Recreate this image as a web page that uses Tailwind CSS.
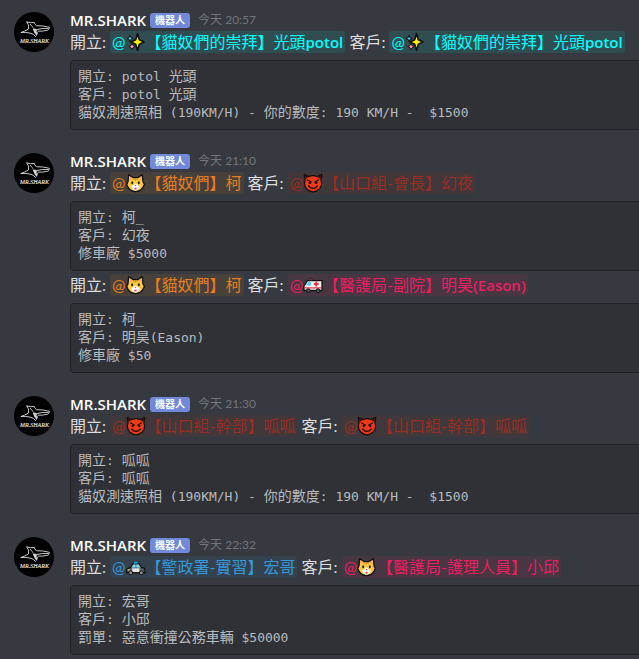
<!DOCTYPE html>
<html lang="zh-Hant">
<head>
<meta charset="utf-8">
<meta name="viewport" content="width=device-width, initial-scale=1">
<title>MR.SHARK</title>
<script src="https://cdn.jsdelivr.net/npm/@tailwindcss/browser@4"></script>
</head>
<body class="bg-[#36393f] overflow-x-hidden font-['Lato','Noto_Sans_CJK_TC',sans-serif] text-base leading-[22px] text-[#dcddde] whitespace-nowrap">
<svg class="hidden" aria-hidden="true">
  <symbol id="avatar" viewBox="0 0 40 40">
    <circle cx="20" cy="20" r="20" fill="#000"/>
    <g fill="none" stroke="#dedede" stroke-width=".9" stroke-linecap="round" stroke-linejoin="round">
      <path d="M13 10Q17 11.300 20.300 10.300 20.500 12.500 22.500 13.700 29 13.500 35.300 15.300 35.500 17.300 33.500 18.300 28 19.500 24 19.200"/>
      <path d="M13 10Q15.300 13 14.600 17 11 19.200 6.800 20.500 12 20 17 21.300 20 22 21.500 24.500"/>
      <path d="M23 17.500Q28 16 34 16.500M16.500 12.500Q17.500 14.500 19 15.500"/>
    </g>
    <path d="M18.600 16.500Q21 16 23 17.500L22.500 20 24 20.500 22.800 24 20.500 21Z" fill="#d0d0d0"/>
    <text x="20.500" y="31" text-anchor="middle" font-family="Liberation Serif, serif" font-style="italic" font-size="6" fill="#dcdcdc" stroke="#dcdcdc" stroke-width=".2">MR.SHARK</text>
  </symbol>
  <symbol id="sparkles" viewBox="0 0 20 20">
    <path d="M11.500 1.500 13.300 7.800 18 10 13.300 12.200 11.500 18.500 9.700 12.200 5 10 9.700 7.800Z" fill="#fff100" stroke="#111" stroke-width="1.600" stroke-linejoin="round"/>
    <path d="M4 3.400 4.900 5.600 7.200 6.500 4.900 7.400 4 9.600 3.100 7.400.8 6.500 3.100 5.600Z" fill="#55c9f5" stroke="#111"/>
    <path d="M6 11.200 7.100 13.600 9.200 14.600 7.100 15.600 6 18 4.900 15.600 2.800 14.600 4.900 13.600Z" fill="#f49ac1" stroke="#111"/>
  </symbol>
  <symbol id="cat" viewBox="0 0 20 20">
    <path d="M2.200 1.600 6.800 4.600h4.400l4.600-3 .7 7.200 1.300 2.800-1.700 3.400Q13.500 18.400 9 18.600 4.500 18.400 1.900 15L.2 11.600 1.500 8.800Z" transform="translate(.5 0)" fill="#ffc83d" stroke="#111" stroke-width="1.300" stroke-linejoin="round"/>
    <path d="M3.900 3.800 6.100 5.400 3.700 7.800ZM15.100 3.800 12.900 5.400 15.300 7.800Z" fill="#f7a56b"/>
    <path d="M9.500 10.200Q11.500 12 13.700 13.200 12.900 17.400 9.500 17.600 6.100 17.400 5.300 13.200 7.500 12 9.500 10.200Z" fill="#fff"/>
    <ellipse cx="6.200" cy="9.800" rx="1" ry="1.500" fill="#222"/><ellipse cx="12.800" cy="9.800" rx="1" ry="1.500" fill="#222"/>
    <path d="M8.500 12h2L9.500 13.300ZM8.500 14.800h2v1.700h-2Z" fill="#e8344a"/>
    <path d="M7.800 5.200v2M9.500 5.200v2.500M11.200 5.200v2" stroke="#c47d18" stroke-width=".8"/>
  </symbol>
  <symbol id="devil" viewBox="0 0 20 20">
    <path d="M1.200 1.300 5.800 3.600Q10 1.800 14.200 3.600L18.800 1.300 18 7.200Q19.800 12.500 16 16.300 13 18.900 10 18.900 7 18.900 4 16.300.2 12.500 2 7.200Z" fill="#f03a17" stroke="#111" stroke-width="1.200" stroke-linejoin="round"/>
    <path d="M1.700 1.800 5.400 3.800 2.500 6.500ZM18.300 1.800 14.600 3.800 17.500 6.500Z" fill="#3a1010"/>
    <path d="M4.600 7 8.300 9.100M15.400 7 11.700 9.100M5.600 13Q10 17.800 14.400 13" fill="none" stroke="#1b0a0a" stroke-width="1.200" stroke-linecap="round"/>
    <circle cx="6.800" cy="9.900" r="1.200" fill="#1b0a0a"/><circle cx="13.200" cy="9.900" r="1.200" fill="#1b0a0a"/>
  </symbol>
  <symbol id="ambulance" viewBox="0 0 20 20">
    <path d="M1 15.500V11L4.500 5.600H19V15.500Z" fill="#f4f4f4" stroke="#111" stroke-width="1.300" stroke-linejoin="round"/>
    <path d="M6 4h3v1.500H6Z" fill="#e8344a" stroke="#111" stroke-width=".6"/>
    <path d="M3 10.500 5.200 7H8v3.500Z" fill="#54c8f0"/>
    <path d="M1.600 12.200h16.800v1.300H1.600ZM12.300 6.600h1.800v1.500h1.500v1.800h-1.500v1.500h-1.800V9.900h-1.500V8.100h1.500Z" fill="#e8344a"/>
    <circle cx="5.300" cy="15.700" r="1.900" fill="#555" stroke="#111"/><circle cx="15" cy="15.700" r="1.900" fill="#555" stroke="#111"/>
  </symbol>
  <symbol id="police" viewBox="0 0 20 20">
    <path d="M.8 15.800V12L4.600 10.300 6.600 6.800H13L15.600 10.300 18.600 11.300 19.200 15.800Z" fill="#566069" stroke="#111" stroke-width="1.300" stroke-linejoin="round"/>
    <path d="M5.600 10.500 7.300 7.600H9.500V10.500ZM10.300 7.600H12.600L14.500 10.500H10.300Z" fill="#7fdcf7"/>
    <path d="M6.200 11.300H13.500V15H6.200Z" fill="#e6e6e6"/>
    <path d="M8 4.800h3.400v1.800H8Z" fill="#18a8f0"/>
    <path d="M1.500 12.300h2v1.200h-2Z" fill="#ffd94a"/>
    <circle cx="4.700" cy="15.900" r="2" fill="#8a8a8a" stroke="#111"/><circle cx="15.300" cy="15.900" r="2" fill="#8a8a8a" stroke="#111"/>
  </symbol>
</svg>

<main class="flex flex-col gap-5 pt-[9px] pl-[14px]">

  <article class="flex gap-4">
    <svg class="mt-[3px] size-10 shrink-0" role="img" aria-label="MR.SHARK"><use href="#avatar"/></svg>
    <div class="-mr-1 grow">
      <header class="flex h-[22px] items-center"><h2 class="font-['Open_Sans'] text-[15px] font-semibold text-white">MR.SHARK</h2><span class="ml-1 rounded-[3px] bg-[#7289da] px-[5px] text-[10px] leading-[15px] font-bold text-white">機器人</span><time class="ml-2 text-xs leading-[22px] text-[#72767d]">今天 20:57</time></header>
      <p>開立: <a href="#" class="inline-flex h-[22px] items-center rounded-[3px] bg-[#00ffff]/10 px-[2px] align-top text-[#00ffff]">@<svg class="size-5"><use href="#sparkles"/></svg>【貓奴們的崇拜】光頭<b class="font-['Open_Sans'] text-[15px] font-semibold">potol</b></a> 客戶: <a href="#" class="inline-flex h-[22px] items-center rounded-[3px] bg-[#00ffff]/10 px-[2px] align-top text-[#00ffff]">@<svg class="size-5"><use href="#sparkles"/></svg>【貓奴們的崇拜】光頭<b class="font-['Open_Sans'] text-[15px] font-semibold">potol</b></a></p>
      <pre class="mt-[7px] rounded border border-[#202225] bg-[#2f3136] p-[7px] font-['DejaVu_Sans_Mono','Noto_Sans_CJK_TC',monospace] text-[13px] leading-[18px] text-[#b9bbbe]"><span class="text-sm leading-none">開立</span>: potol <span class="text-sm leading-none">光頭</span>
<span class="text-sm leading-none">客戶</span>: potol <span class="text-sm leading-none">光頭</span>
<span class="text-sm leading-none">貓奴測速照相</span> (190KM/H) - <span class="text-sm leading-none">你的數度</span>: 190 KM/H -  $1500</pre>
    </div>
  </article>

  <article class="flex gap-4">
    <svg class="mt-[3px] size-10 shrink-0" role="img" aria-label="MR.SHARK"><use href="#avatar"/></svg>
    <div class="-mr-1 grow">
      <header class="flex h-[22px] items-center"><h2 class="font-['Open_Sans'] text-[15px] font-semibold text-white">MR.SHARK</h2><span class="ml-1 rounded-[3px] bg-[#7289da] px-[5px] text-[10px] leading-[15px] font-bold text-white">機器人</span><time class="ml-2 text-xs leading-[22px] text-[#72767d]">今天 21:10</time></header>
      <p>開立: <a href="#" class="inline-flex h-[22px] items-center rounded-[3px] bg-[#e67e22]/10 px-[2px] align-top text-[#e67e22]">@<svg class="size-5"><use href="#cat"/></svg>【貓奴們】柯</a> 客戶: <a href="#" class="inline-flex h-[22px] items-center rounded-[3px] bg-[#992d22]/10 px-[2px] align-top text-[#992d22]">@<svg class="size-5"><use href="#devil"/></svg>【山口組-會長】幻夜</a></p>
      <pre class="mt-[7px] rounded border border-[#202225] bg-[#2f3136] p-[7px] font-['DejaVu_Sans_Mono','Noto_Sans_CJK_TC',monospace] text-[13px] leading-[18px] text-[#b9bbbe]"><span class="text-sm leading-none">開立</span>: <span class="text-sm leading-none">柯</span>_
<span class="text-sm leading-none">客戶</span>: <span class="text-sm leading-none">幻夜</span>
<span class="text-sm leading-none">修車廠</span> $5000</pre>
      <p class="mt-[3px]">開立: <a href="#" class="inline-flex h-[22px] items-center rounded-[3px] bg-[#e67e22]/10 px-[2px] align-top text-[#e67e22]">@<svg class="size-5"><use href="#cat"/></svg>【貓奴們】柯</a> 客戶: <a href="#" class="inline-flex h-[22px] items-center rounded-[3px] bg-[#e91e63]/10 px-[2px] align-top text-[#e91e63]">@<svg class="size-5"><use href="#ambulance"/></svg>【醫護局-副院】明昊<b class="font-['Open_Sans'] text-[15px] font-semibold">(Eason)</b></a></p>
      <pre class="mt-[7px] rounded border border-[#202225] bg-[#2f3136] p-[7px] font-['DejaVu_Sans_Mono','Noto_Sans_CJK_TC',monospace] text-[13px] leading-[18px] text-[#b9bbbe]"><span class="text-sm leading-none">開立</span>: <span class="text-sm leading-none">柯</span>_
<span class="text-sm leading-none">客戶</span>: <span class="text-sm leading-none">明昊</span>(Eason)
<span class="text-sm leading-none">修車廠</span> $50</pre>
    </div>
  </article>

  <article class="flex gap-4">
    <svg class="mt-[3px] size-10 shrink-0" role="img" aria-label="MR.SHARK"><use href="#avatar"/></svg>
    <div class="-mr-1 grow">
      <header class="flex h-[22px] items-center"><h2 class="font-['Open_Sans'] text-[15px] font-semibold text-white">MR.SHARK</h2><span class="ml-1 rounded-[3px] bg-[#7289da] px-[5px] text-[10px] leading-[15px] font-bold text-white">機器人</span><time class="ml-2 text-xs leading-[22px] text-[#72767d]">今天 21:30</time></header>
      <p>開立: <a href="#" class="inline-flex h-[22px] items-center rounded-[3px] bg-[#992d22]/10 px-[2px] align-top text-[#992d22]">@<svg class="size-5"><use href="#devil"/></svg>【山口組-幹部】呱呱</a> 客戶: <a href="#" class="inline-flex h-[22px] items-center rounded-[3px] bg-[#992d22]/10 px-[2px] align-top text-[#992d22]">@<svg class="size-5"><use href="#devil"/></svg>【山口組-幹部】呱呱</a></p>
      <pre class="mt-[7px] rounded border border-[#202225] bg-[#2f3136] p-[7px] font-['DejaVu_Sans_Mono','Noto_Sans_CJK_TC',monospace] text-[13px] leading-[18px] text-[#b9bbbe]"><span class="text-sm leading-none">開立</span>: <span class="text-sm leading-none">呱呱</span>
<span class="text-sm leading-none">客戶</span>: <span class="text-sm leading-none">呱呱</span>
<span class="text-sm leading-none">貓奴測速照相</span> (190KM/H) - <span class="text-sm leading-none">你的數度</span>: 190 KM/H -  $1500</pre>
    </div>
  </article>

  <article class="flex gap-4">
    <svg class="mt-[3px] size-10 shrink-0" role="img" aria-label="MR.SHARK"><use href="#avatar"/></svg>
    <div class="-mr-1 grow">
      <header class="flex h-[22px] items-center"><h2 class="font-['Open_Sans'] text-[15px] font-semibold text-white">MR.SHARK</h2><span class="ml-1 rounded-[3px] bg-[#7289da] px-[5px] text-[10px] leading-[15px] font-bold text-white">機器人</span><time class="ml-2 text-xs leading-[22px] text-[#72767d]">今天 22:32</time></header>
      <p>開立: <a href="#" class="inline-flex h-[22px] items-center rounded-[3px] bg-[#3498db]/10 px-[2px] align-top text-[#3498db]">@<svg class="size-5"><use href="#police"/></svg>【警政署-實習】宏哥</a> 客戶: <a href="#" class="inline-flex h-[22px] items-center rounded-[3px] bg-[#e91e63]/10 px-[2px] align-top text-[#e91e63]">@<svg class="size-5"><use href="#cat"/></svg>【醫護局-護理人員】小邱</a></p>
      <pre class="mt-[7px] rounded border border-[#202225] bg-[#2f3136] p-[7px] font-['DejaVu_Sans_Mono','Noto_Sans_CJK_TC',monospace] text-[13px] leading-[18px] text-[#b9bbbe]"><span class="text-sm leading-none">開立</span>: <span class="text-sm leading-none">宏哥</span>
<span class="text-sm leading-none">客戶</span>: <span class="text-sm leading-none">小邱</span>
<span class="text-sm leading-none">罰單</span>: <span class="text-sm leading-none">惡意衝撞公務車輛</span> $50000</pre>
    </div>
  </article>
</main>
</body>
</html>
